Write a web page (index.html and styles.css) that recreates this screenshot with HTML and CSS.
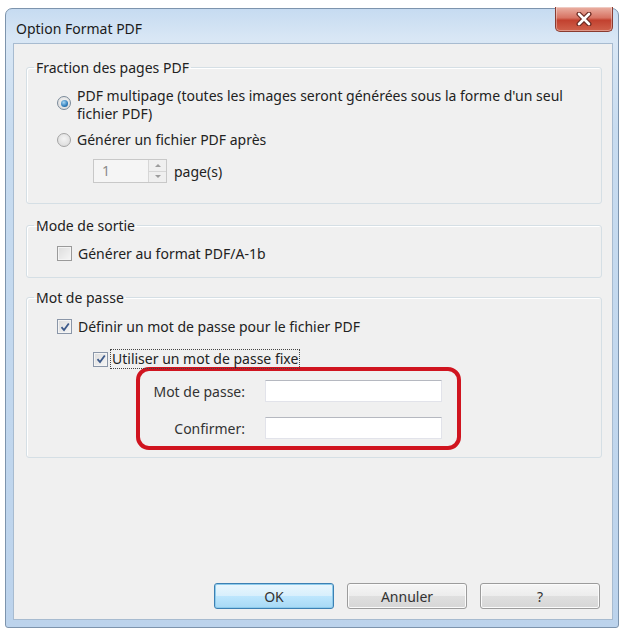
FILE: index.html
```html
<!DOCTYPE html>
<html lang="fr">

<head>
    <meta charset="UTF-8">
    <meta name="viewport" content="width=device-width, initial-scale=1.0">
    <link rel="stylesheet" href="styles.css">
    <title>Option Format PDF</title>
</head>

<body>
    <div class="window">
        <div class="titlebar">
            <span class="title">Option Format PDF</span>
            <div class="close">
                <svg width="16" height="14" viewBox="0 0 16 14">
                    <path d="M3 2 L13 12 M13 2 L3 12" stroke="#6b2a22" stroke-width="5" stroke-linecap="round" />
                    <path d="M3 2 L13 12 M13 2 L3 12" stroke="#fff" stroke-width="2.6" stroke-linecap="round" />
                </svg>
            </div>
        </div>

        <div class="client">
            <fieldset class="group group-pages">
                <legend>Fraction des pages PDF</legend>
                <div class="opt opt-multi">
                    <span class="radio checked"></span>
                    <span class="label">PDF multipage (toutes les images seront générées sous la forme d'un seul<br>fichier PDF)</span>
                </div>
                <div class="opt opt-after">
                    <span class="radio"></span>
                    <span class="label">Générer un fichier PDF après</span>
                </div>
                <div class="spin-row">
                    <div class="spin">
                        <span class="spin-value">1</span>
                        <div class="spin-arrows">
                            <span class="arrow up"></span>
                            <span class="arrow down"></span>
                        </div>
                    </div>
                    <span>page(s)</span>
                </div>
            </fieldset>

            <fieldset class="group group-mode">
                <legend>Mode de sortie</legend>
                <div class="opt">
                    <span class="check"></span>
                    <span class="label">Générer au format PDF/A-1b</span>
                </div>
            </fieldset>

            <fieldset class="group group-pass">
                <legend>Mot de passe</legend>
                <div class="opt">
                    <span class="check checked">
                        <svg width="10" height="10" viewBox="0 0 10 10"><path d="M1.5 5.2 L4 8 L8.8 1.5" fill="none" stroke="#3d5a8a" stroke-width="1.8" /></svg>
                    </span>
                    <span class="label">Définir un mot de passe pour le fichier PDF</span>
                </div>
                <div class="opt opt-fixed">
                    <span class="check checked">
                        <svg width="10" height="10" viewBox="0 0 10 10"><path d="M1.5 5.2 L4 8 L8.8 1.5" fill="none" stroke="#3d5a8a" stroke-width="1.8" /></svg>
                    </span>
                    <span class="label focus">Utiliser un mot de passe fixe</span>
                </div>
                <div class="pass-box">
                    <div class="field">
                        <span class="field-label">Mot de passe:</span>
                        <span class="input"></span>
                    </div>
                    <div class="field">
                        <span class="field-label">Confirmer:</span>
                        <span class="input"></span>
                    </div>
                </div>
            </fieldset>

            <div class="buttons">
                <button class="btn default">OK</button>
                <button class="btn">Annuler</button>
                <button class="btn">?</button>
            </div>
        </div>
    </div>
</body>

</html>
```

FILE: styles.css
```css
* {
    margin: 0;
    padding: 0;
    box-sizing: border-box;
}

body {
    background: #fff;
    padding: 8px 0 0 5px;
    font-family: "Noto Sans", "Open Sans", sans-serif;
    font-size: 14px;
    color: #222;
}

/* window frame */
.window {
    width: 614px;
    height: 620px;
    border: 1px solid #7d94ad;
    border-radius: 7px 7px 3px 3px;
    background: linear-gradient(to bottom, #c6dbf1, #d9e7f5 30px, #c8dcf0 120px, #bcd3ec);
    display: flex;
    flex-direction: column;
}

.titlebar {
    height: 34px;
    display: flex;
    justify-content: space-between;
    align-items: flex-start;
    padding-left: 10px;
}

.title {
    margin-top: 10px;
    font-size: 14px;
    color: #1b1b1b;
}

.close {
    width: 58px;
    height: 25px;
    margin-top: -2px;
    margin-right: 5px;
    border: 1px solid #8a3b30;
    border-top: none;
    border-radius: 0 0 5px 5px;
    background: linear-gradient(to bottom, #eab1a4, #d77363 45%, #c2412f 55%, #d0624c);
    display: flex;
    justify-content: center;
    align-items: center;
    box-shadow: inset 0 0 0 1px rgba(255, 255, 255, 0.35);
}

.client {
    margin: 0 5px 0 7px;
    height: 577px;
    border: 1px solid #a7bbd0;
    background: #f0f0f0;
    padding: 15px 10px 10px 12px;
    display: flex;
    flex-direction: column;
}

/* group boxes */
.group {
    border: 1px solid #d5dfe5;
    border-radius: 3px;
    box-shadow: inset 1px 1px 0 #fff;
    padding: 0 0 0 30px;
    margin-bottom: 13px;
    min-width: 0;
}

.group legend {
    margin-left: -23px;
    padding: 0 2px;
    line-height: 17px;
}

.opt {
    display: flex;
    align-items: flex-start;
    line-height: 17px;
}

.opt .label {
    margin-left: 6px;
}

.group-pages {
    padding-top: 11px;
    padding-bottom: 20px;
}

.opt-multi {
    line-height: 18px;
}

.opt-after {
    margin-top: 8px;
}

.radio {
    width: 14px;
    height: 14px;
    margin-top: 2px;
    border: 1px solid #a3a3a3;
    border-radius: 50%;
    background: radial-gradient(circle at 50% 40%, #f4f4f4, #d7d7d7);
    flex-shrink: 0;
    display: flex;
    justify-content: center;
    align-items: center;
}

.radio.checked {
    margin-top: 9px;
    border-color: #7a8a99;
}

.radio.checked::after {
    content: "";
    width: 7px;
    height: 7px;
    border-radius: 50%;
    background: radial-gradient(circle at 40% 35%, #a8d8f5, #2f7dbb 60%, #1d4f80);
}

.spin-row {
    display: flex;
    align-items: center;
    gap: 7px;
    margin: 11px 0 0 36px;
}

.spin {
    width: 74px;
    height: 24px;
    border: 1px solid #c8c8c8;
    background: #f5f5f5;
    display: flex;
}

.spin-value {
    flex: 1;
    padding-left: 8px;
    line-height: 22px;
    color: #8a8a8a;
}

.spin-arrows {
    width: 18px;
    border-left: 1px solid #d6d6d6;
    display: flex;
    flex-direction: column;
}

.arrow {
    flex: 1;
    display: flex;
    justify-content: center;
    align-items: center;
    background: #efefef;
}

.arrow.up {
    border-bottom: 1px solid #d6d6d6;
}

.arrow.up::after {
    content: "";
    border: 3px solid transparent;
    border-bottom: 3px solid #9c9c9c;
    border-top: none;
}

.arrow.down::after {
    content: "";
    border: 3px solid transparent;
    border-top: 3px solid #9c9c9c;
    border-bottom: none;
}

.group-mode {
    padding-top: 11px;
    padding-bottom: 15px;
    margin-bottom: 11px;
}

.check {
    width: 15px;
    height: 15px;
    margin-top: 1px;
    border: 1px solid #9a9a9a;
    background: linear-gradient(135deg, #dcdcdc, #f6f6f6);
    box-shadow: inset 0 0 0 1px #f4f4f4;
    flex-shrink: 0;
    display: flex;
    justify-content: center;
    align-items: center;
}

.check.checked {
    border-color: #8a96a8;
}

.group-pass {
    padding-top: 12px;
    padding-bottom: 7px;
}

.opt-fixed {
    margin: 14px 0 0 36px;
    height: 20px;
    align-items: center;
}

.opt-fixed .label {
    margin-left: 2px;
    height: 20px;
    padding: 0 1px;
    line-height: 18px;
    border: 1px dotted #444;
}

.opt-fixed .check {
    margin-top: 0;
}

/* highlighted password fields */
.pass-box {
    margin: -2px 0 0 79px;
    width: 325px;
    border: 4px solid #d0141f;
    border-radius: 13px;
    padding: 9px 0 7px;
    display: flex;
    flex-direction: column;
    gap: 15px;
}

.field {
    display: flex;
    align-items: center;
    gap: 20px;
}

.field-label {
    width: 105px;
    text-align: right;
    color: #333;
}

.input {
    width: 177px;
    height: 22px;
    background: #fff;
    border: 1px solid #e2e3ea;
    border-top-color: #b5b8c0;
}

/* dialog buttons */
.buttons {
    margin-top: auto;
    display: flex;
    justify-content: flex-end;
    gap: 13px;
    padding-right: 2px;
}

.btn {
    width: 120px;
    height: 26px;
    font: inherit;
    color: #333;
    border: 1px solid #9c9c9c;
    border-radius: 3px;
    background: linear-gradient(to bottom, #f6f6f6, #ececec 50%, #dfdfdf 51%, #d6d6d6);
    box-shadow: inset 0 0 0 1px #fbfbfb;
}

.btn.default {
    border-color: #3c80b3;
    background: linear-gradient(to bottom, #eaf6fd, #d7effc 50%, #bde6fd 51%, #a7d9f5);
    box-shadow: inset 0 0 0 1px #8ecbeb;
}
```
